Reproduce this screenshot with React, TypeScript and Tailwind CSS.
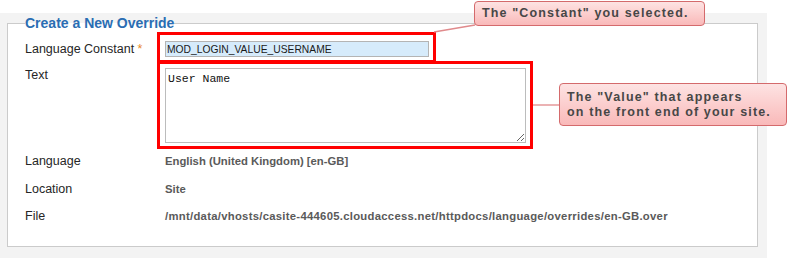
import React from 'react';

const rows = [
  { label: 'Language', value: 'English (United Kingdom) [en-GB]', mt: 'mt-[10px]', extra: '' },
  { label: 'Location', value: 'Site', mt: 'mt-[12px]', extra: '' },
  {
    label: 'File',
    value: '/mnt/data/vhosts/casite-444605.cloudaccess.net/httpdocs/language/overrides/en-GB.over',
    mt: 'mt-[11px]',
    extra: 'tracking-[0.28px]',
  },
];

function Callout({ className, children }: { className: string; children: React.ReactNode }) {
  return (
    <div
      className={`absolute rounded-[4px] border border-[#d46a6c] bg-gradient-to-b from-[#fde3e3] to-[#f9b9b9] font-bold text-[12.5px] leading-[15px] tracking-[1.15px] text-[#474747] ${className}`}
    >
      {children}
    </div>
  );
}

export default function App() {
  return (
    <div
      className="relative w-[788px] h-[258px] overflow-hidden bg-white text-[#262626]"
      style={{ fontFamily: '"Liberation Sans", Arial, sans-serif' }}
    >
      {/* Form panel */}
      <div className="mt-[13px] w-[767px] h-[245px] bg-[#f3f3f3] pt-[1px]">
        <fieldset className="ml-[7px] w-[751px] border border-[#cbcbcb] bg-white pl-[17px] pt-[9px] pb-[22px]">
          <legend className="text-[14px] leading-[18px] font-bold text-[#2a6db3]">
            Create a New Override
          </legend>

          <div className="flex items-center h-[16px]">
            <label className="w-[140px] text-[12.5px] leading-[16px]">
              Language Constant <span className="text-[#e98a2c]">*</span>
            </label>
            <input
              readOnly
              value="MOD_LOGIN_VALUE_USERNAME"
              className="w-[264px] h-[16px] border border-[#b4b4b4] bg-[#d6ebfb] px-[1px] text-[10.3px] text-[#1a1a1a] outline-none"
            />
          </div>

          <div className="flex items-start mt-[11px]">
            <label className="w-[140px] text-[12.5px] leading-[14px]">Text</label>
            <textarea
              readOnly
              value="User Name"
              className="w-[361px] h-[75px] border border-[#bcbcbc] bg-white px-[2px] py-[3px] text-[11.5px] leading-[14px] text-[#111] outline-none"
              style={{ fontFamily: '"Liberation Mono", "Courier New", monospace' }}
            />
          </div>

          {rows.map((r) => (
            <div key={r.label} className={`flex items-center leading-[16px] ${r.mt}`}>
              <span className="w-[140px] text-[12.5px]">{r.label}</span>
              <span className={`text-[11.3px] font-bold text-[#5a5a5a] ${r.extra}`}>{r.value}</span>
            </div>
          ))}
        </fieldset>
      </div>

      {/* Annotation overlays */}
      <div className="pointer-events-none absolute left-[157px] top-[32px] w-[279px] h-[31px] border-[3px] border-[#ff0000]" />
      <div className="pointer-events-none absolute left-[157px] top-[61px] w-[376px] h-[88px] border-[3px] border-[#ff0000]" />

      <svg className="pointer-events-none absolute left-0 top-0" width="788" height="258">
        <line x1="475" y1="25" x2="434" y2="32" stroke="#e08a8c" strokeWidth="1.5" />
        <line x1="533" y1="105" x2="560" y2="105" stroke="#ebb2b3" strokeWidth="2" />
      </svg>

      <Callout className="left-[474px] top-[1px] w-[231px] h-[25px] pl-[7px] pt-[4px]">
        The "Constant" you selected.
      </Callout>
      <Callout className="left-[559px] top-[83px] w-[228px] h-[43px] pl-[7px] pt-[6px]">
        The "Value" that appears
        <br />
        on the front end of your site.
      </Callout>
    </div>
  );
}
